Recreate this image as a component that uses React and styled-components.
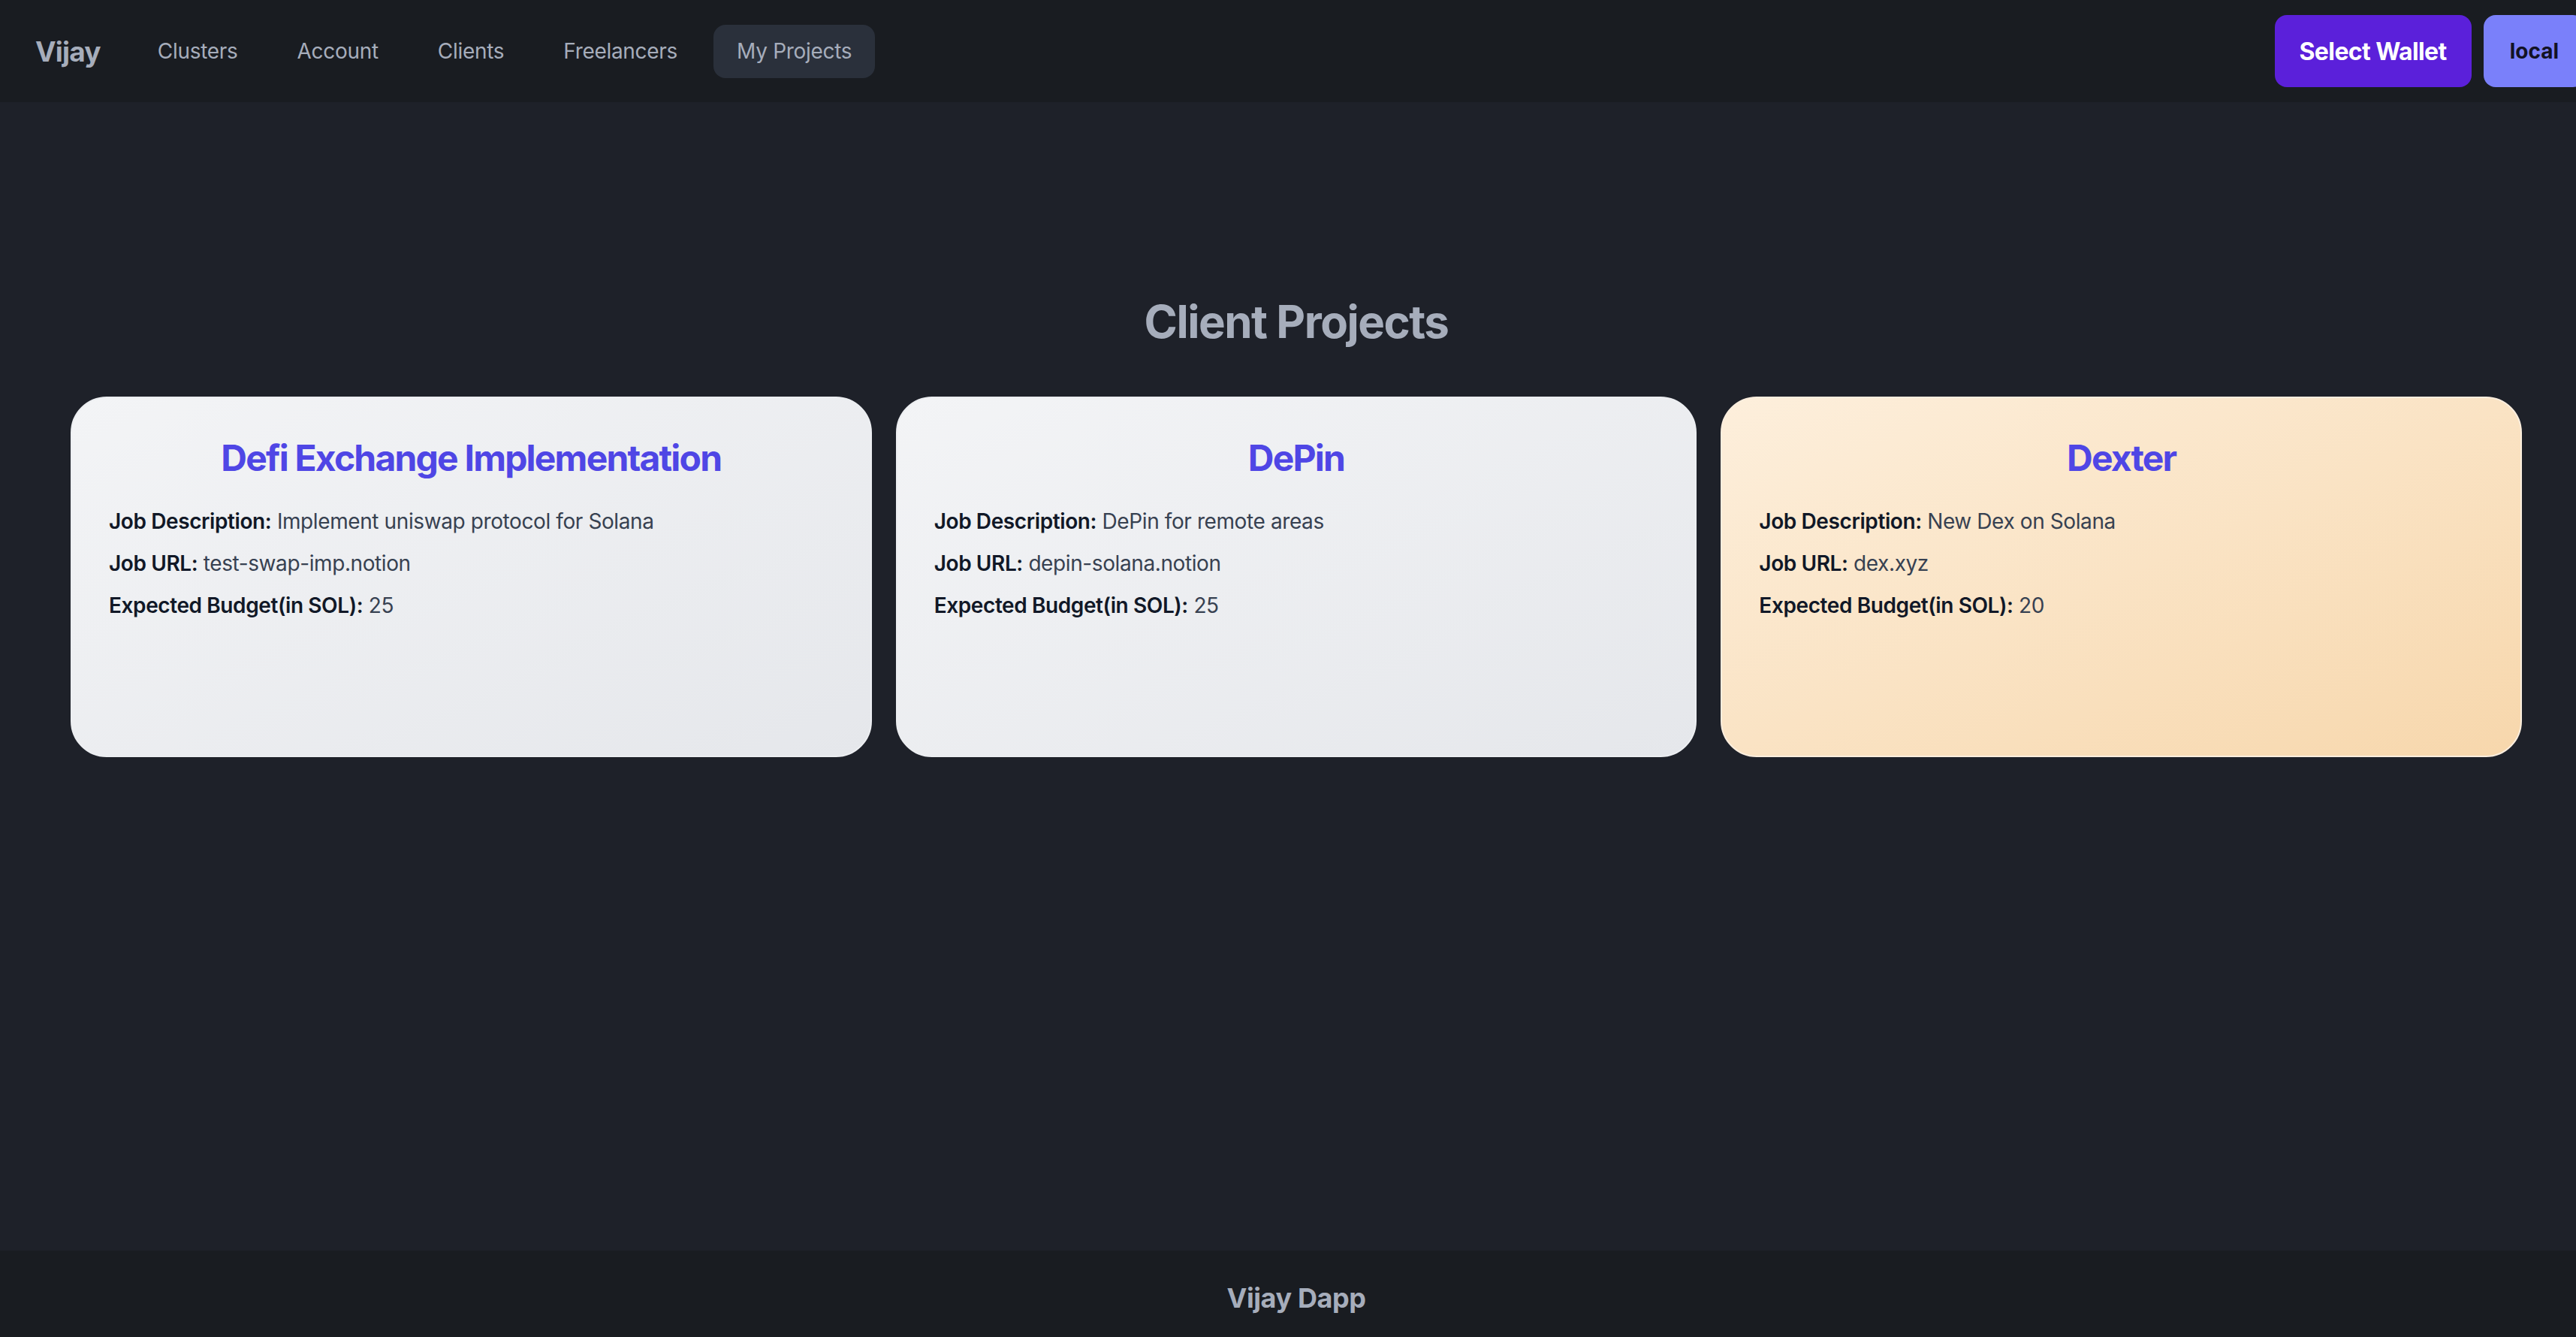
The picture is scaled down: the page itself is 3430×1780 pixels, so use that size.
import React from 'react';
import styled, { createGlobalStyle } from 'styled-components';

const GlobalStyle = createGlobalStyle`
  html, body {
    margin: 0;
    padding: 0;
    overflow: hidden;
    background: #1d2029;
  }
  body {
    font-family: Inter, "Noto Sans", "Liberation Sans", sans-serif;
    color: #a6adbb;
  }
  * { box-sizing: border-box; }
`;

const Page = styled.div`
  min-width: 3452px;
  display: flex;
  flex-direction: column;
  background: #1e2129;
`;

const Navbar = styled.nav`
  height: 136px;
  display: flex;
  align-items: center;
  justify-content: space-between;
  padding: 0 10px 0 16px;
  background: #191c21;
`;

const Left = styled.div`
  display: flex;
  align-items: center;
`;

const Brand = styled.a`
  padding: 0 32px 0 31px;
  font-size: 37px;
  font-weight: 700;
  letter-spacing: -0.8px;
  color: #a6adbb;
  text-decoration: none;
`;

const Menu = styled.ul`
  display: flex;
  align-items: center;
  gap: 17px;
  list-style: none;
  margin: 0 0 0 13px;
  padding: 0;
`;

const MenuItem = styled.li`
  height: 71px;
  display: flex;
  align-items: center;
  padding: 0 31px;
  border-radius: 16px;
  font-size: 28px;
  letter-spacing: -0.3px;
  color: #a6adbb;
  background: ${({ $active }) => ($active ? '#2a303b' : 'transparent')};
`;

const Right = styled.div`
  display: flex;
  align-items: center;
  gap: 16px;
`;

const WalletButton = styled.button`
  height: 96px;
  border: none;
  border-radius: 16px;
  background: ${({ $variant }) => ($variant === 'local' ? '#7a80fa' : '#5b20da')};
  color: ${({ $variant }) => ($variant === 'local' ? '#121224' : '#ffffff')};
  font-family: Inter, "Liberation Sans", sans-serif;
  font-size: ${({ $variant }) => ($variant === 'local' ? '28px' : '32px')};
  font-weight: 700;
  letter-spacing: ${({ $variant }) => ($variant === 'local' ? '0' : '-0.6px')};
  padding: ${({ $variant }) => ($variant === 'local' ? '0 35px' : '0 33px')};
`;

const Main = styled.main`
  min-height: 1529px;
  padding: 256px 94px 0;
  display: flex;
  flex-direction: column;
  align-items: center;
`;

const Title = styled.h1`
  margin: 0 0 64px;
  font-size: 60px;
  line-height: 72px;
  font-weight: 700;
  color: #a6adbb;
  letter-spacing: -1.5px;
`;

const Grid = styled.div`
  width: 100%;
  display: grid;
  grid-template-columns: repeat(3, 1fr);
  gap: 32px;
`;

const Card = styled.div`
  height: 480px;
  padding: 48px 49px;
  border-radius: 48px;
  border: 2px solid ${({ $tone }) => ($tone === 'orange' ? '#fbeede' : '#eceef1')};
  background: ${({ $tone }) =>
    $tone === 'orange'
      ? 'linear-gradient(to bottom right, #fdefdc, #f7d7ac)'
      : 'linear-gradient(to bottom right, #f3f4f6, #e5e7eb)'};
`;

const CardTitle = styled.h2`
  margin: 0 0 32px;
  text-align: center;
  font-size: 48px;
  line-height: 64px;
  font-weight: 700;
  letter-spacing: -1.8px;
  color: #4f46e5;
`;

const Line = styled.p`
  margin: 0 0 16px;
  font-size: 28px;
  line-height: 40px;
  letter-spacing: -0.4px;
  color: #374151;
`;

const Label = styled.span`
  font-weight: 600;
  color: #111827;
`;

const Footer = styled.footer`
  height: 126px;
  display: flex;
  align-items: center;
  justify-content: center;
  background: #191c21;
  font-size: 36px;
  font-weight: 700;
  letter-spacing: -0.4px;
  color: #a6adbb;
`;

const projects = [
  { name: 'Defi Exchange Implementation', desc: 'Implement uniswap protocol for Solana', url: 'test-swap-imp.notion', budget: 25, tone: 'gray' },
  { name: 'DePin', desc: 'DePin for remote areas', url: 'depin-solana.notion', budget: 25, tone: 'gray' },
  { name: 'Dexter', desc: 'New Dex on Solana', url: 'dex.xyz', budget: 20, tone: 'orange' },
];

const links = ['Clusters', 'Account', 'Clients', 'Freelancers', 'My Projects'];

export default function App() {
  return (
    <Page>
      <GlobalStyle />
      <Navbar>
        <Left>
          <Brand>Vijay</Brand>
          <Menu>
            {links.map((l) => (
              <MenuItem key={l} $active={l === 'My Projects'}>{l}</MenuItem>
            ))}
          </Menu>
        </Left>
        <Right>
          <WalletButton>Select Wallet</WalletButton>
          <WalletButton $variant="local">local</WalletButton>
        </Right>
      </Navbar>
      <Main>
        <Title>Client Projects</Title>
        <Grid>
          {projects.map((p) => (
            <Card key={p.name} $tone={p.tone}>
              <CardTitle>{p.name}</CardTitle>
              <Line><Label>Job Description:</Label> {p.desc}</Line>
              <Line><Label>Job URL:</Label> {p.url}</Line>
              <Line><Label>Expected Budget(in SOL):</Label> {p.budget}</Line>
            </Card>
          ))}
        </Grid>
      </Main>
      <Footer>Vijay Dapp</Footer>
    </Page>
  );
}
